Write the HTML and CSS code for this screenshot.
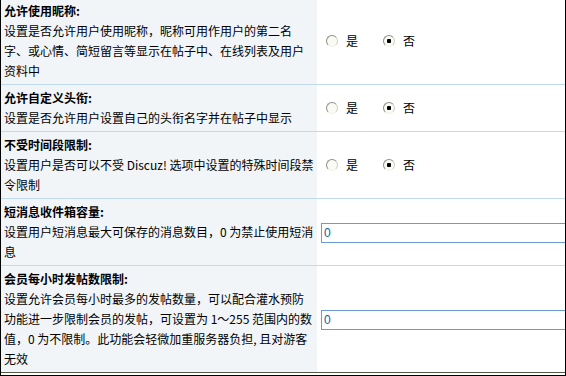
FILE: index.html
```html
<!DOCTYPE html>
<html lang="zh-CN">
<head>
    <meta charset="UTF-8">
    <title>用户组权限设置</title>
    <link rel="stylesheet" href="styles.css">
</head>
<body>
    <div class="frame">
        <table class="settings">
            <colgroup>
                <col class="col-label">
                <col>
            </colgroup>
            <tr>
                <td class="label"><b>允许使用昵称:</b><br><span class="tip">设置是否允许用户使用昵称，昵称可用作用户的第二名字、或心情、简短留言等显示在帖子中、在线列表及用户资料中</span></td>
                <td class="field">
                    <div class="radios">
                        <label><input type="radio" name="allownickname" value="1">是</label>
                        <label><input type="radio" name="allownickname" value="0" checked>否</label>
                    </div>
                </td>
            </tr>
            <tr>
                <td class="label"><b>允许自定义头衔:</b><br><span class="tip">设置是否允许用户设置自己的头衔名字并在帖子中显示</span></td>
                <td class="field">
                    <div class="radios">
                        <label><input type="radio" name="allowcstatus" value="1">是</label>
                        <label><input type="radio" name="allowcstatus" value="0" checked>否</label>
                    </div>
                </td>
            </tr>
            <tr>
                <td class="label"><b>不受时间段限制:</b><br><span class="tip">设置用户是否可以不受 Discuz! 选项中设置的特殊时间段禁令限制</span></td>
                <td class="field">
                    <div class="radios">
                        <label><input type="radio" name="disableperiodctrl" value="1">是</label>
                        <label><input type="radio" name="disableperiodctrl" value="0" checked>否</label>
                    </div>
                </td>
            </tr>
            <tr>
                <td class="label"><b>短消息收件箱容量:</b><br><span class="tip">设置用户短消息最大可保存的消息数目，0 为禁止使用短消息</span></td>
                <td class="field"><input type="text" class="txt" name="maxpmnum" value="0"></td>
            </tr>
            <tr class="last">
                <td class="label"><b>会员每小时发帖数限制:</b><br><span class="tip">设置允许会员每小时最多的发帖数量，可以配合灌水预防功能进一步限制会员的发帖，可设置为 1～255 范围内的数值，0 为不限制。此功能会轻微加重服务器负担, 且对游客无效</span></td>
                <td class="field"><input type="text" class="txt" name="maxpostsperhour" value="0"></td>
            </tr>
        </table>
    </div>
</body>
</html>
```

FILE: styles.css
```css
/* Base */
body {
    margin: 0;
    background: #fff;
    color: #000;
    font: 12px "Noto Sans CJK SC", sans-serif;
}

.frame {
    width: 564px;
    height: 375px;
    border-left: 1px solid #000;
    border-right: 1px solid #000;
    border-bottom: 1px solid #000;
    background: #fff;
    overflow: hidden;
}

/* Settings table */
.settings {
    width: 564px;
    margin-top: -2px;
    table-layout: fixed;
    border-collapse: separate;
    border-spacing: 0;
}

.col-label {
    width: 316px;
}

.settings td {
    border-bottom: 1px solid #c0dcec;
    line-height: 20px;
}

.settings .last td {
    border-bottom-color: #535a48;
}

.label {
    background: #f1f5f8;
    padding: 3px 3px 3px 3px;
    vertical-align: top;
}

.label b {
    font-weight: bold;
}

.field {
    background: #fff;
    padding: 3px 4px;
    vertical-align: middle;
    white-space: nowrap;
}

/* Radios */
.radios {
    display: flex;
    align-items: center;
    gap: 20px;
}

.radios label {
    display: flex;
    align-items: center;
}

.radios input {
    appearance: none;
    -webkit-appearance: none;
    width: 12px;
    height: 12px;
    margin: 0 8px 0 5px;
    border: 1px solid;
    border-color: #8e8e84 #cfcfc4 #f2f2ea #8e8e84;
    border-radius: 50%;
    background: #fbfbf6;
}

.radios input:checked {
    background: radial-gradient(circle, #000 0, #000 2px, #fbfbf6 2.5px);
}

/* Text inputs */
.txt {
    width: 250px;
    height: 20px;
    box-sizing: border-box;
    margin: 0;
    padding: 0 2px;
    border: 1px solid #6c9bd2;
    font: 12px "Liberation Sans", sans-serif;
    color: #0a63a0;
    background: #fff;
}
```
